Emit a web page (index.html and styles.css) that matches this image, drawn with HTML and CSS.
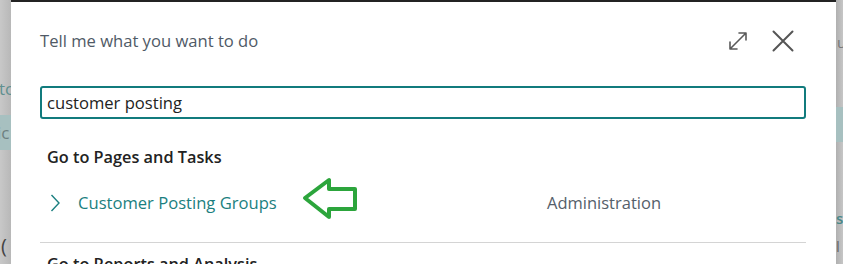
FILE: index.html
```html
<!DOCTYPE html>
<html>
<head>
<meta charset="utf-8">
<link rel="stylesheet" href="styles.css">
</head>
<body>
<div class="screen">
  <div class="side side-left">
    <div class="frag frag-tc">tc</div>
    <div class="band"><span class="frag frag-ic">ic</span></div>
    <div class="frag frag-curve">(</div>
  </div>
  <div class="dialog">
    <div class="header">
      <div class="title">Tell me what you want to do</div>
      <div class="tools">
        <svg class="icon-expand" width="20" height="20" viewBox="0 0 20 20">
          <path d="M2 18 L18 2 M11 2 H18 V9 M2 11 V18 H9" fill="none" stroke="#5a5a5a" stroke-width="1.6" stroke-linecap="round" stroke-linejoin="round"/>
        </svg>
        <svg class="icon-close" width="22" height="22" viewBox="0 0 22 22">
          <path d="M1.5 1.5 L20.5 20.5 M20.5 1.5 L1.5 20.5" fill="none" stroke="#555" stroke-width="2" stroke-linecap="round"/>
        </svg>
      </div>
    </div>
    <div class="search">customer posting</div>
    <div class="section-title">Go to Pages and Tasks</div>
    <div class="result">
      <svg class="chev" width="10" height="18" viewBox="0 0 10 18">
        <path d="M1.5 1 L9 9 L1.5 17" fill="none" stroke="#1b7f80" stroke-width="1.4"/>
      </svg>
      <span class="name">Customer Posting Groups</span>
      <span class="category">Administration</span>
      <svg class="annot" width="60" height="46" viewBox="0 0 60 46">
        <path d="M4 22 L28 4 V13 H54 V33 H28 V41 Z" fill="none" stroke="#2ca53c" stroke-width="4" stroke-linejoin="round"/>
      </svg>
    </div>
    <div class="divider"></div>
    <div class="section-title next">Go to Reports and Analysis</div>
  </div>
  <div class="side side-right">
    <div class="frag frag-u">u</div>
    <div class="band"></div>
    <div class="frag frag-st">st</div>
    <div class="frag frag-l">l</div>
  </div>
</div>
</body>
</html>
```
FILE: styles.css
```css
html, body {
  margin: 0;
  padding: 0;
  background: #ffffff;
}
body {
  width: 843px;
  height: 264px;
  overflow: hidden;
  font-family: "Open Sans", "Noto Sans", sans-serif;
}
.screen {
  display: flex;
  width: 843px;
  height: 264px;
  overflow: hidden;
}
.side {
  flex: none;
  height: 264px;
  overflow: hidden;
  display: flex;
  flex-direction: column;
}
.side-left {
  width: 11px;
  background: linear-gradient(to right, #c8c8c8, #b8b8b8);
}
.side-right {
  width: 7px;
  background: linear-gradient(to right, #b0b0b0, #c6c6c6);
}
.frag {
  font-size: 17px;
  line-height: 20px;
  color: #6f8c8e;
  white-space: nowrap;
}
.frag-tc { margin-top: 79px; margin-left: -1px; color: #5f9090; }
.band {
  margin-top: 16px;
  height: 35px;
  background: #a7c0c0;
  display: flex;
  align-items: center;
}
.frag-ic { margin-left: -3px; color: #6d7f80; }
.frag-curve { margin-top: 86px; margin-left: 1px; color: #444; font-size: 20px; }
.side-right .band { margin-top: 55px; }
.frag-u { margin-top: 32px; margin-left: 1px; color: #777; font-size: 15px; }
.frag-st { margin-top: 66px; color: #4a8888; font-weight: 600; font-size: 15px; }
.frag-l { margin-top: 8px; color: #666; font-size: 15px; }

.dialog {
  flex: 1;
  min-width: 0;
  height: 264px;
  box-sizing: border-box;
  border-top: 2px solid #232323;
  padding: 18px 30px 0 29px;
  background: #ffffff;
  overflow: hidden;
}
.header {
  height: 40px;
  display: flex;
  align-items: center;
  justify-content: space-between;
}
.title {
  font-size: 16.6px;
  color: #505a66;
}
.tools {
  display: flex;
  align-items: center;
  gap: 24px;
  margin-right: 12px;
  margin-top: 2px;
}
.icon-expand, .icon-close { display: block; }
.search {
  margin-top: 26px;
  height: 33px;
  box-sizing: border-box;
  border: 2px solid #117b7d;
  border-radius: 3px;
  padding: 0 5px;
  display: flex;
  align-items: center;
  font-size: 16.6px;
  color: #222;
}
.section-title {
  margin-top: 27px;
  margin-left: 7px;
  height: 22px;
  line-height: 22px;
  font-size: 16.3px;
  font-weight: 600;
  color: #222;
}
.result {
  position: relative;
  margin-top: 16px;
  height: 36px;
  display: grid;
  grid-template-columns: 38px 469px 1fr;
  align-items: center;
}
.chev { margin-left: 10px; display: block; margin-top: 1px; }
.name {
  font-size: 16.6px;
  color: #1b7f80;
}
.category {
  font-size: 16.5px;
  color: #55606a;
}
.annot {
  position: absolute;
  left: 261px;
  top: -8px;
}
.divider {
  margin-top: 22px;
  height: 1px;
  background: #d4d4d4;
}
.section-title.next {
  margin-top: 10px;
}
```
